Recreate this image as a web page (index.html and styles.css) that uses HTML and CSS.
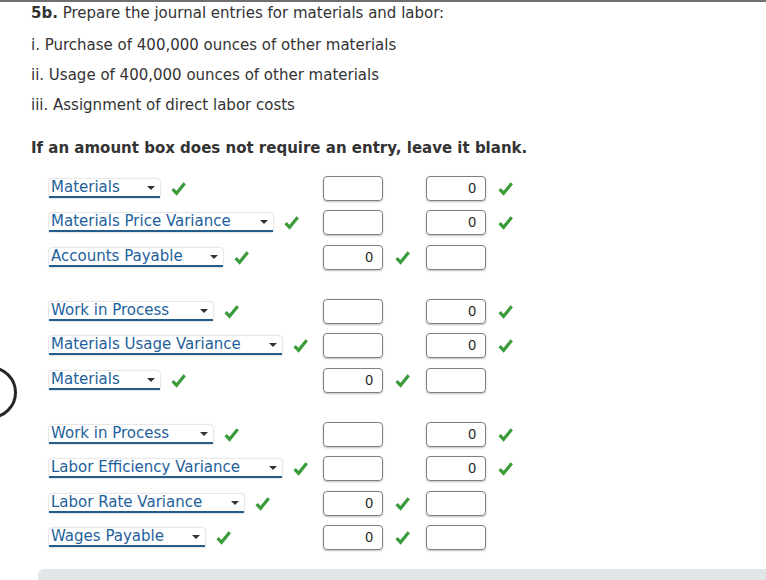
FILE: index.html
```html
<!DOCTYPE html>
<html>
<head>
<meta charset="utf-8">
<link rel="stylesheet" href="styles.css">
</head>
<body>
<div class="topline"></div>
<div class="ring"></div>
<div class="q">
  <p class="title"><b>5b.</b> Prepare the journal entries for materials and labor:</p>
  <p class="line first">i. Purchase of 400,000 ounces of other materials</p>
  <p class="line">ii. Usage of 400,000 ounces of other materials</p>
  <p class="line">iii. Assignment of direct labor costs</p>
  <p class="note">If an amount box does not require an entry, leave it blank.</p>

  <div class="entries">
    <div class="group">
      <div class="row">
        <div class="acct"><span class="sel w111">Materials<i class="arr"></i></span><svg class="chk" viewBox="0 0 14 14"><path d="M1.5 7.5 L5.2 11.5 L12.8 2.2"/></svg></div>
        <div class="cell"><span class="box"></span></div>
        <div class="cell"><span class="box">0</span><svg class="chk" viewBox="0 0 14 14"><path d="M1.5 7.5 L5.2 11.5 L12.8 2.2"/></svg></div>
      </div>
      <div class="row">
        <div class="acct"><span class="sel w224">Materials Price Variance<i class="arr"></i></span><svg class="chk" viewBox="0 0 14 14"><path d="M1.5 7.5 L5.2 11.5 L12.8 2.2"/></svg></div>
        <div class="cell"><span class="box"></span></div>
        <div class="cell"><span class="box">0</span><svg class="chk" viewBox="0 0 14 14"><path d="M1.5 7.5 L5.2 11.5 L12.8 2.2"/></svg></div>
      </div>
      <div class="row">
        <div class="acct"><span class="sel w174">Accounts Payable<i class="arr"></i></span><svg class="chk" viewBox="0 0 14 14"><path d="M1.5 7.5 L5.2 11.5 L12.8 2.2"/></svg></div>
        <div class="cell"><span class="box">0</span><svg class="chk" viewBox="0 0 14 14"><path d="M1.5 7.5 L5.2 11.5 L12.8 2.2"/></svg></div>
        <div class="cell"><span class="box"></span></div>
      </div>
    </div>

    <div class="group">
      <div class="row">
        <div class="acct"><span class="sel w164">Work in Process<i class="arr"></i></span><svg class="chk" viewBox="0 0 14 14"><path d="M1.5 7.5 L5.2 11.5 L12.8 2.2"/></svg></div>
        <div class="cell"><span class="box"></span></div>
        <div class="cell"><span class="box">0</span><svg class="chk" viewBox="0 0 14 14"><path d="M1.5 7.5 L5.2 11.5 L12.8 2.2"/></svg></div>
      </div>
      <div class="row">
        <div class="acct"><span class="sel w233">Materials Usage Variance<i class="arr"></i></span><svg class="chk" viewBox="0 0 14 14"><path d="M1.5 7.5 L5.2 11.5 L12.8 2.2"/></svg></div>
        <div class="cell"><span class="box"></span></div>
        <div class="cell"><span class="box">0</span><svg class="chk" viewBox="0 0 14 14"><path d="M1.5 7.5 L5.2 11.5 L12.8 2.2"/></svg></div>
      </div>
      <div class="row">
        <div class="acct"><span class="sel w111">Materials<i class="arr"></i></span><svg class="chk" viewBox="0 0 14 14"><path d="M1.5 7.5 L5.2 11.5 L12.8 2.2"/></svg></div>
        <div class="cell"><span class="box">0</span><svg class="chk" viewBox="0 0 14 14"><path d="M1.5 7.5 L5.2 11.5 L12.8 2.2"/></svg></div>
        <div class="cell"><span class="box"></span></div>
      </div>
    </div>

    <div class="group">
      <div class="row">
        <div class="acct"><span class="sel w164">Work in Process<i class="arr"></i></span><svg class="chk" viewBox="0 0 14 14"><path d="M1.5 7.5 L5.2 11.5 L12.8 2.2"/></svg></div>
        <div class="cell"><span class="box"></span></div>
        <div class="cell"><span class="box">0</span><svg class="chk" viewBox="0 0 14 14"><path d="M1.5 7.5 L5.2 11.5 L12.8 2.2"/></svg></div>
      </div>
      <div class="row">
        <div class="acct"><span class="sel w233">Labor Efficiency Variance<i class="arr"></i></span><svg class="chk" viewBox="0 0 14 14"><path d="M1.5 7.5 L5.2 11.5 L12.8 2.2"/></svg></div>
        <div class="cell"><span class="box"></span></div>
        <div class="cell"><span class="box">0</span><svg class="chk" viewBox="0 0 14 14"><path d="M1.5 7.5 L5.2 11.5 L12.8 2.2"/></svg></div>
      </div>
      <div class="row">
        <div class="acct"><span class="sel w195">Labor Rate Variance<i class="arr"></i></span><svg class="chk" viewBox="0 0 14 14"><path d="M1.5 7.5 L5.2 11.5 L12.8 2.2"/></svg></div>
        <div class="cell"><span class="box">0</span><svg class="chk" viewBox="0 0 14 14"><path d="M1.5 7.5 L5.2 11.5 L12.8 2.2"/></svg></div>
        <div class="cell"><span class="box"></span></div>
      </div>
      <div class="row">
        <div class="acct"><span class="sel w156">Wages Payable<i class="arr"></i></span><svg class="chk" viewBox="0 0 14 14"><path d="M1.5 7.5 L5.2 11.5 L12.8 2.2"/></svg></div>
        <div class="cell"><span class="box">0</span><svg class="chk" viewBox="0 0 14 14"><path d="M1.5 7.5 L5.2 11.5 L12.8 2.2"/></svg></div>
        <div class="cell"><span class="box"></span></div>
      </div>
    </div>
  </div>
</div>
<div class="footer"></div>
</body>
</html>
```
FILE: styles.css
```css
html, body {
  margin: 0;
  padding: 0;
  background: #fff;
  height: 580px;
  overflow: hidden;
}
body {
  font-family: "DejaVu Sans", Verdana, sans-serif;
  font-size: 15px;
  color: #333;
  position: relative;
}
.topline {
  height: 2px;
  background: #6f6f6f;
}
.ring {
  position: absolute;
  left: -36px;
  top: 366px;
  width: 47px;
  height: 47px;
  border: 3px solid #262626;
  border-radius: 50%;
}
.q {
  padding-left: 31px;
}
.q p {
  margin: 0;
  line-height: 30px;
}
.title {
  margin-top: -4px !important;
}
.title b {
  font-weight: bold;
}
.first {
  margin-top: 2px !important;
}
.note {
  font-weight: bold;
  margin-top: 13px !important;
}
.entries {
  margin-top: 8px;
  padding-left: 18px;
}
.group {
  margin-bottom: 19.5px;
}
.row {
  display: grid;
  grid-template-columns: 274px 103px auto;
  height: 34.5px;
  align-items: center;
}
.acct, .cell {
  display: flex;
  align-items: center;
}
.sel {
  position: relative;
  display: inline-block;
  box-sizing: border-box;
  height: 19px;
  line-height: 16px;
  padding-left: 2px;
  color: #1e5f9c;
  background: #fff;
  border-bottom: 2px solid #225d8c;
  box-shadow: 0 0 2px rgba(0,0,0,0.35);
  border-radius: 3px 3px 0 0;
  white-space: nowrap;
}
.arr {
  position: absolute;
  right: 5px;
  top: 7px;
  width: 0;
  height: 0;
  border-left: 4px solid transparent;
  border-right: 4px solid transparent;
  border-top: 4px solid #333;
}
.w111 { width: 111px; }
.w156 { width: 156px; }
.w164 { width: 164px; }
.w174 { width: 174px; }
.w195 { width: 195px; }
.w224 { width: 224px; }
.w233 { width: 233px; }
.chk {
  width: 15px;
  height: 15px;
  margin-left: 11px;
  fill: none;
  stroke: #3a9b3a;
  stroke-width: 3;
  stroke-linejoin: miter;
}
.box {
  box-sizing: border-box;
  display: inline-block;
  width: 60px;
  height: 25px;
  border: 1px solid #7f7f7f;
  border-radius: 4px;
  box-shadow: 0 1px 2px rgba(0,0,0,0.25);
  text-align: right;
  padding-right: 9px;
  font-family: "Liberation Sans", Arial, sans-serif;
  font-size: 14px;
  line-height: 23px;
  color: #222;
}
.cell .chk {
  margin-left: 12px;
}
.footer {
  position: absolute;
  left: 38px;
  right: 0;
  top: 569px;
  height: 20px;
  background: #e1e7e9;
  border-radius: 6px 0 0 0;
}
```
